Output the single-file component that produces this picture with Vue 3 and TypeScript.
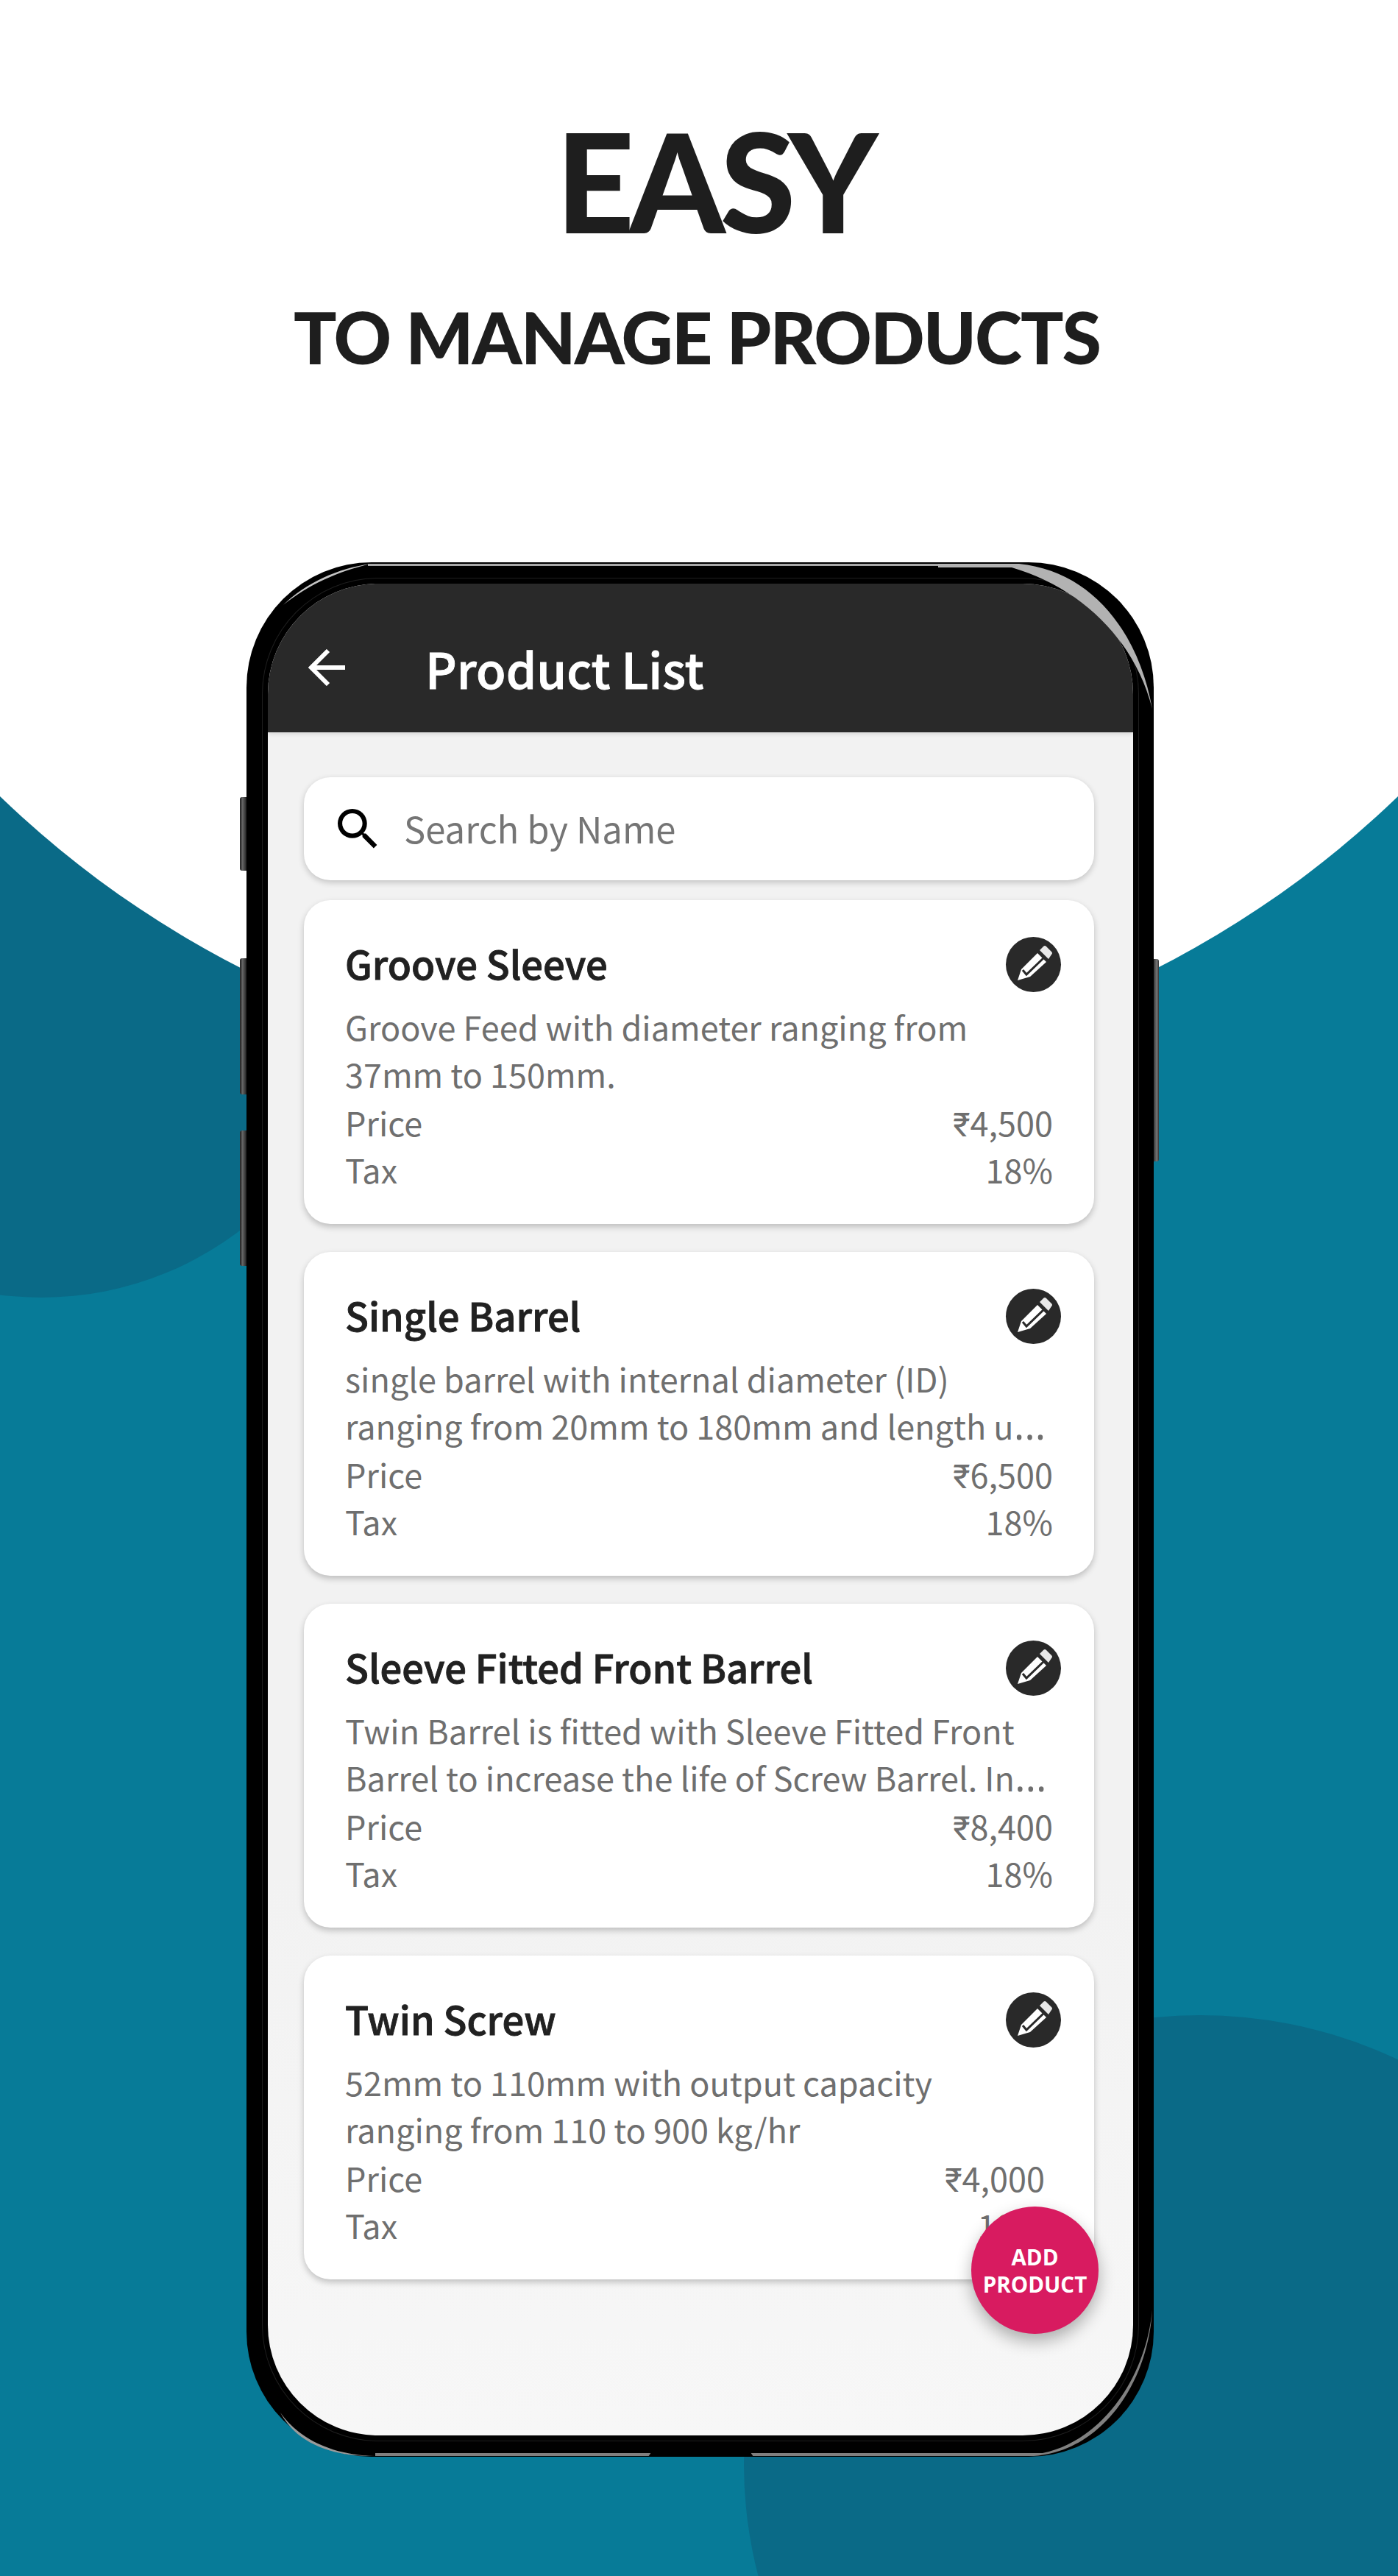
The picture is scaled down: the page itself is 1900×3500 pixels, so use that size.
<script setup lang="ts">
interface Product {
  name: string
  desc: string
  truncated?: boolean
  price: string
  tax: string
  shifted?: boolean
}

const products: Product[] = [
  {
    name: 'Groove Sleeve',
    desc: 'Groove Feed with diameter ranging from 37mm to 150mm.',
    price: '₹4,500',
    tax: '18%',
  },
  {
    name: 'Single Barrel',
    desc: 'single barrel with internal diameter (ID) ranging from 20mm to 180mm and length u',
    truncated: true,
    price: '₹6,500',
    tax: '18%',
  },
  {
    name: 'Sleeve Fitted Front Barrel',
    desc: 'Twin Barrel is fitted with Sleeve Fitted Front Barrel to increase the life of Screw Barrel. In',
    truncated: true,
    price: '₹8,400',
    tax: '18%',
  },
  {
    name: 'Twin Screw',
    desc: '52mm to 110mm with output capacity ranging from 110 to 900 kg/hr',
    price: '₹4,000',
    tax: '18%',
    shifted: true,
  },
]
</script>

<template>
  <div class="page">
    <div class="blob blob-left"></div>
    <div class="blob blob-right"></div>
    <div class="blob blob-white"></div>

    <header class="hero">
      <h1 class="hero-main">EASY</h1>
      <h2 class="hero-sub">TO MANAGE PRODUCTS</h2>
    </header>

    <div class="phone">
      <span class="side side-a"></span>
      <span class="side side-b"></span>
      <span class="side side-c"></span>
      <span class="side side-r"></span>

      <div class="screen">
        <div class="appbar">
          <svg class="back" viewBox="0 0 50 50" fill="none" stroke="#fff" stroke-width="6">
            <path d="M50 25H4" />
            <path d="M27 2 4 25l23 23" />
          </svg>
          <span class="appbar-title">Product List</span>
        </div>

        <div class="content">
          <div class="search">
            <svg class="search-icon" viewBox="3 3 18 18" fill="#000">
              <path d="M15.5 14h-.79l-.28-.27A6.47 6.47 0 0 0 16 9.5 6.5 6.5 0 1 0 9.5 16c1.61 0 3.09-.59 4.23-1.57l.27.28v.79l5 4.99L20.49 19l-4.99-5zm-6 0C7.01 14 5 11.99 5 9.5S7.01 5 9.5 5 14 7.01 14 9.5 11.99 14 9.5 14z" />
            </svg>
            <span class="placeholder">Search by Name</span>
          </div>

          <article v-for="p in products" :key="p.name" class="card">
            <div class="card-head">
              <span class="card-name">{{ p.name }}</span>
              <span class="edit">
                <svg viewBox="0 0 75 75" width="75" height="75">
                  <path fill="#fff" d="M16 59 21 44 43 22 55 34 33 54Z" />
                  <path fill="none" stroke="#292929" stroke-width="3" d="M23 45 28 51 52 28" />
                  <path fill="#e8e8e8" d="M46 18 51 13Q53 11 55 13L62 20Q64 22 62 24L58 30Z" />
                </svg>
              </span>
            </div>
            <p class="card-desc">{{ p.desc }}<span v-if="p.truncated" class="dots">…</span></p>
            <div class="row" :class="{ shifted: p.shifted }">
              <span>Price</span><span>{{ p.price }}</span>
            </div>
            <div class="row" :class="{ shifted: p.shifted }">
              <span>Tax</span><span>{{ p.tax }}</span>
            </div>
          </article>
        </div>

        <div class="fab">ADD<br />PRODUCT</div>
      </div>

      <svg class="gloss" viewBox="0 0 1233 2574" width="1233" height="2574">
        <path fill="#a8a8a8" d="M165 2H940V5H165Z" />
        <path fill="#b2b2b2" d="M940 2H1050C1150 12 1213 97 1231 199C1207 105 1135 35 1040 7H940Z" />
        <path fill="#c4c4c4" d="M50 58C80 28 125 8 169 2C125 12 85 30 50 58Z" />
        <path fill="#808080" d="M1231 2374C1222 2470 1160 2553 1082 2569L175 2569V2573H1070C1165 2566 1226 2470 1231 2374Z" />
        <path fill="#9a9a9a" d="M46 2514C75 2555 125 2572 174 2573C125 2574 70 2560 46 2514Z" />
        <path fill="#000" d="M546 2574 550 2568H685L689 2574Z" />
      </svg>
    </div>
  </div>
</template>

<style scoped>
.page {
  position: relative;
  width: 1900px;
  height: 3500px;
  overflow: hidden;
  background: #077b98;
}

.blob {
  position: absolute;
  border-radius: 50%;
}

.blob-left {
  left: -390px;
  top: 871px;
  width: 892px;
  height: 892px;
  background: #0a6a87;
}

.blob-right {
  left: 1011px;
  top: 2738px;
  width: 1240px;
  height: 1220px;
  background: #0a6a87;
}

.blob-white {
  left: -420px;
  top: -1275px;
  width: 2740px;
  height: 2740px;
  background: #fff;
}

.hero {
  position: relative;
  height: 764px;
  text-align: center;
  color: #1e1e1e;
  font-family: Lato, "Liberation Sans", sans-serif;
}

.hero-main {
  margin: 0;
  padding-top: 150px;
  padding-left: 42px;
  font-size: 186px;
  line-height: 190px;
  font-weight: 900;
  letter-spacing: -7px;
}

.hero-sub {
  margin: 0;
  padding-top: 63px;
  padding-right: 6px;
  font-size: 97px;
  line-height: 110px;
  font-weight: 900;
  letter-spacing: -2px;
  white-space: nowrap;
}

.phone {
  position: relative;
  box-sizing: border-box;
  width: 1233px;
  height: 2574px;
  margin-left: 335px;
  padding: 29px 28px 29px 29px;
  border-radius: 170px;
  background: #000;
}

.side {
  position: absolute;
  width: 9px;
  border-radius: 3px 0 0 3px;
  background: linear-gradient(90deg, #1c1c1c, #666 40%, #222);
}

.side-a { left: -9px; top: 319px; height: 100px; }
.side-b { left: -9px; top: 538px; height: 185px; }
.side-c { left: -9px; top: 772px; height: 184px; }

.side-r {
  right: -7px;
  top: 539px;
  width: 7px;
  height: 275px;
  border-radius: 0 3px 3px 0;
  background: linear-gradient(90deg, #333, #777 60%, #333);
}

.screen {
  position: relative;
  height: 100%;
  border-radius: 150px;
  overflow: hidden;
  background: linear-gradient(180deg, #f2f2f2 70%, #f7f7f7 100%);
  box-shadow: 0 0 0 7px #000, 0 0 0 8px #1f1f1f;
  font-family: "Noto Sans CJK SC", Roboto, sans-serif;
}

.appbar {
  display: flex;
  align-items: center;
  height: 202px;
  padding: 26px 0 0 55px;
  background: #292929;
  box-shadow: 0 2px 6px rgba(0, 0, 0, 0.12);
  box-sizing: border-box;
}

.back {
  width: 50px;
  height: 50px;
  flex: none;
}

.appbar-title {
  margin-left: 109px;
  color: #fff;
  font-size: 66px;
  font-weight: 500;
  line-height: 80px;
  -webkit-text-stroke: 0.9px #fff;
}

.content {
  display: flex;
  flex-direction: column;
  gap: 38px;
  padding: 61px 53px 0 49px;
}

.search {
  display: flex;
  align-items: center;
  height: 140px;
  margin-bottom: -11px;
  padding-left: 46px;
  border-radius: 36px;
  background: #fff;
  box-shadow: 0 3px 8px rgba(0, 0, 0, 0.2);
}

.search-icon {
  width: 55px;
  height: 55px;
  flex: none;
}

.placeholder {
  margin: -3px 0 0 35px;
  color: #757575;
  font-size: 49px;
  line-height: 64px;
}

.card {
  box-sizing: border-box;
  height: 440px;
  padding: 53px 56px 0;
  border-radius: 36px;
  background: #fff;
  box-shadow: 0 4px 8px rgba(0, 0, 0, 0.22);
}

.card-head {
  position: relative;
  height: 64px;
  margin-bottom: 23px;
}

.card-name {
  color: #212121;
  font-size: 52.5px;
  font-weight: 500;
  line-height: 64px;
  -webkit-text-stroke: 0.9px #212121;
}

.edit {
  position: absolute;
  right: -11px;
  top: -3px;
  width: 75px;
  height: 75px;
  border-radius: 50%;
  background: #292929;
}

.edit svg {
  display: block;
}

.card-desc {
  height: 128px;
  margin: 0 0 2px;
  overflow: hidden;
  color: #6f6f6f;
  font-size: 45px;
  line-height: 64px;
}

.dots {
  font-family: "Open Sans", sans-serif;
  font-size: 56px;
  line-height: 0;
}

.row {
  display: flex;
  justify-content: space-between;
  color: #6f6f6f;
  font-size: 45px;
  line-height: 64px;
}

.row.shifted {
  padding-right: 11px;
}

.fab {
  position: absolute;
  right: 47px;
  bottom: 138px;
  box-sizing: border-box;
  width: 173px;
  height: 173px;
  padding-top: 50px;
  border-radius: 50%;
  background: #d81b60;
  box-shadow: 0 10px 22px rgba(0, 0, 0, 0.3);
  color: #fff;
  font-family: "Open Sans", "Noto Sans", sans-serif;
  font-size: 29.5px;
  font-weight: 700;
  line-height: 37px;
  text-align: center;
}

.gloss {
  position: absolute;
  left: 0;
  top: 0;
  pointer-events: none;
}
</style>

<style>
html,
body {
  margin: 0;
  background: #fff;
}
</style>
